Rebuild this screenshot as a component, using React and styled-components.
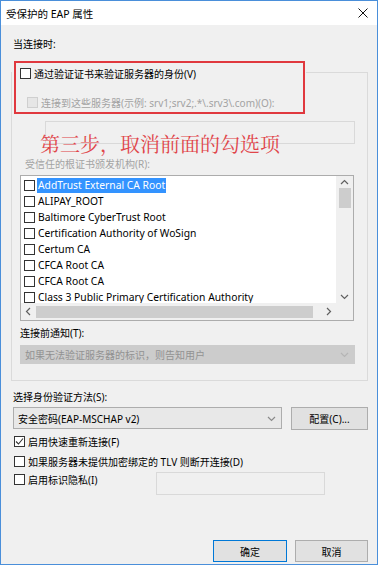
import React from 'react'
import styled, { createGlobalStyle } from 'styled-components'

const Global = createGlobalStyle`
  html, body { margin: 0; padding: 0; background: #ffffff; }
  body { font-family: "Noto Sans", "Noto Sans CJK SC", sans-serif; }
`

const Window = styled.div`
  width: 378px;
  height: 565px;
  box-sizing: border-box;
  border: 1px solid #4a8fda;
  display: flex;
  flex-direction: column;
  background: #f0f0f0;
  overflow: hidden;
`
const TitleBar = styled.div`
  height: 24px;
  background: #ffffff;
  display: flex;
  align-items: center;
  justify-content: space-between;
  padding: 0 9px 0 5px;
  font-size: 10.5px;
  color: #000;
`
const Body = styled.div`
  flex: 1;
  position: relative;
  display: flex;
  flex-direction: column;
  padding: 11px 9px 1px 10px;
  font-size: 10px;
  color: #000;
`
const Label = styled.div`
  height: 16px;
  line-height: 16px;
  margin-top: ${(p) => p.$mt || 0}px;
  margin-left: ${(p) => p.$ml || 0}px;
  color: ${(p) => (p.$disabled ? '#a3a3a3' : '#000')};
  white-space: nowrap;
`
const Panel = styled.div`
  margin-top: 20px;
  border: 1px solid #dadada;
  display: flex;
  flex-direction: column;
  padding-bottom: 16px;
`
const PanelHeader = styled.div`
  margin-top: -8px;
  width: 294px;
  height: 16px;
  padding-left: 8px;
  box-sizing: border-box;
  background: #f0f0f0;
  display: flex;
  align-items: center;
`
const CheckRow = styled.div`
  display: flex;
  align-items: center;
  gap: 3px;
  height: 16px;
  margin-top: ${(p) => p.$mt || 0}px;
  margin-left: ${(p) => p.$ml || 0}px;
  color: ${(p) => (p.$disabled ? '#a3a3a3' : '#000')};
  white-space: nowrap;
`
const Box = styled.span`
  width: 11px;
  height: 11px;
  box-sizing: border-box;
  flex: none;
  border: 1px solid ${(p) => (p.$disabled ? '#cfcfcf' : '#333333')};
  background: ${(p) => (p.$disabled ? '#e6e6e6' : '#ffffff')};
  display: flex;
  align-items: center;
  justify-content: center;
`
const TextField = styled.div`
  margin-top: ${(p) => p.$mt || 0}px;
  margin-left: ${(p) => p.$ml || 0}px;
  width: ${(p) => p.$w}px;
  height: 23px;
  box-sizing: border-box;
  border: 1px solid #d9d9d9;
  background: #f0f0f0;
  flex: none;
`
const ListBox = styled.div`
  margin: 3px 0 0 8px;
  width: 334px;
  height: 146px;
  box-sizing: border-box;
  border: 1px solid #acacac;
  background: #ffffff;
  display: grid;
  grid-template-columns: 1fr 17px;
  grid-template-rows: 1fr 17px;
  font-size: 10.3px;
`
const Items = styled.div`
  padding: 1px 0 0 3px;
  overflow: hidden;
`
const Item = styled.div`
  height: 16px;
  display: flex;
  align-items: center;
  gap: 2px;
  white-space: nowrap;
`
const ItemText = styled.span`
  padding: 0 1px;
  line-height: 15px;
  background: ${(p) => (p.$selected ? '#3393ff' : 'transparent')};
  color: ${(p) => (p.$selected ? '#ffffff' : '#000')};
`
const VScroll = styled.div`
  background: #f0f0f0;
  display: flex;
  flex-direction: column;
  align-items: center;
  justify-content: space-between;
  padding: 3px 0;
`
const VThumb = styled.div`
  width: 12px;
  height: 20px;
  background: #cdcdcd;
  margin-top: 2px;
  margin-bottom: auto;
`
const HScroll = styled.div`
  background: #f0f0f0;
  display: flex;
  align-items: center;
  padding: 0 4px 0 4px;
`
const HThumb = styled.div`
  width: 277px;
  height: 12px;
  background: #cdcdcd;
  margin: 0 auto 0 4px;
`
const Corner = styled.div`
  background: #f0f0f0;
`
const Combo = styled.div`
  margin-top: ${(p) => p.$mt || 0}px;
  margin-left: ${(p) => p.$ml || 0}px;
  width: ${(p) => p.$w}px;
  height: ${(p) => p.$h || 22}px;
  box-sizing: border-box;
  border: 1px solid ${(p) => (p.$disabled ? '#cccccc' : '#adadad')};
  background: ${(p) => (p.$disabled ? '#cccccc' : '#e8e8e8')};
  color: ${(p) => (p.$disabled ? '#929292' : '#000')};
  display: flex;
  align-items: center;
  justify-content: space-between;
  padding: 0 5px 0 4px;
  white-space: nowrap;
`
const Button = styled.div`
  width: ${(p) => p.$w}px;
  height: ${(p) => p.$h || 22}px;
  box-sizing: border-box;
  border: 1px solid ${(p) => (p.$focused ? '#0078d7' : '#adadad')};
  background: #e1e1e1;
  display: flex;
  align-items: center;
  justify-content: center;
  flex: none;
`
const MethodRow = styled.div`
  display: flex;
  gap: 9px;
  margin-left: 2px;
  margin-top: 2px;
`
const PrivacyRow = styled.div`
  display: flex;
  align-items: flex-start;
  margin-top: 2px;
`
const PrivacyLabel = styled.div`
  width: 145px;
  flex: none;
`
const Footer = styled.div`
  margin-top: auto;
  display: flex;
  justify-content: flex-end;
  gap: 8px;
  padding-bottom: 1px;
`
const RedFrame = styled.div`
  position: absolute;
  left: 13px;
  top: 36px;
  width: 291px;
  height: 53px;
  box-sizing: border-box;
  border: 2px solid #e0383e;
  pointer-events: none;
`
const Note = styled.div`
  position: absolute;
  left: 39px;
  top: 110px;
  font-family: "Noto Serif CJK SC", "Noto Sans CJK SC", serif;
  font-size: 20px;
  line-height: 18px;
  color: #e0454a;
  white-space: nowrap;
`

const Chevron = ({ dir = 'down', color = '#606060' }) => {
  const d = {
    up: 'M1 5 L4.5 1.5 L8 5',
    down: 'M1 2 L4.5 5.5 L8 2',
    left: 'M5 1 L1.5 4.5 L5 8',
    right: 'M2 1 L5.5 4.5 L2 8',
  }[dir]
  const horiz = dir === 'left' || dir === 'right'
  return (
    <svg width={horiz ? 7 : 9} height={horiz ? 9 : 7} viewBox={horiz ? '0 0 7 9' : '0 0 9 7'}>
      <path d={d} fill="none" stroke={color} strokeWidth="1.2" />
    </svg>
  )
}

const Check = ({ checked, disabled }) => (
  <Box $disabled={disabled}>
    {checked && (
      <svg width="9" height="9" viewBox="0 0 9 9">
        <path d="M1 4.5 L3.5 7 L8 1.5" fill="none" stroke="#333" strokeWidth="1.1" />
      </svg>
    )}
  </Box>
)

const certs = [
  'AddTrust External CA Root',
  'ALIPAY_ROOT',
  'Baltimore CyberTrust Root',
  'Certification Authority of WoSign',
  'Certum CA',
  'CFCA Root CA',
  'CFCA Root CA',
  'Class 3 Public Primary Certification Authority',
]

export default function App() {
  return (
    <>
      <Global />
      <Window>
        <TitleBar>
          <span>受保护的 EAP 属性</span>
          <svg width="10" height="10" viewBox="0 0 10 10">
            <path d="M0.5 0.5 L9.5 9.5 M9.5 0.5 L0.5 9.5" stroke="#111" strokeWidth="1" />
          </svg>
        </TitleBar>
        <Body>
          <Label $ml={2}>当连接时:</Label>
          <Panel>
            <PanelHeader>
              <CheckRow>
                <Check />
                <span>通过验证证书来验证服务器的身份(V)</span>
              </CheckRow>
            </PanelHeader>
            <CheckRow $mt={13} $ml={15} $disabled>
              <Check disabled />
              <span>连接到这些服务器(示例: srv1;srv2;.*\.srv3\.com)(O):</span>
            </CheckRow>
            <TextField $mt={11} $ml={33} $w={310} />
            <Label $mt={12} $ml={13} $disabled>受信任的根证书颁发机构(R):</Label>
            <ListBox>
              <Items>
                {certs.map((c, i) => (
                  <Item key={i}>
                    <Check />
                    <ItemText $selected={i === 0}>{c}</ItemText>
                  </Item>
                ))}
              </Items>
              <VScroll>
                <Chevron dir="up" />
                <VThumb />
                <Chevron dir="down" />
              </VScroll>
              <HScroll>
                <Chevron dir="left" />
                <HThumb />
                <Chevron dir="right" />
              </HScroll>
              <Corner />
            </ListBox>
            <Label $mt={4} $ml={8}>连接前通知(T):</Label>
            <Combo $mt={4} $ml={8} $w={335} $h={19} $disabled>
              <span>如果无法验证服务器的标识，则告知用户</span>
              <Chevron dir="down" color="#b5b5b5" />
            </Combo>
          </Panel>
          <Label $mt={8} $ml={2}>选择身份验证方法(S):</Label>
          <MethodRow>
            <Combo $w={269} $h={22}>
              <span>安全密码(EAP-MSCHAP v2)</span>
              <Chevron dir="down" color="#8a8a8a" />
            </Combo>
            <Button $w={77} $h={23}>配置(C)...</Button>
          </MethodRow>
          <CheckRow $mt={3} $ml={3}>
            <Check checked />
            <span>启用快速重新连接(F)</span>
          </CheckRow>
          <CheckRow $mt={4} $ml={3}>
            <Check />
            <span>如果服务器未提供加密绑定的 TLV 则断开连接(D)</span>
          </CheckRow>
          <PrivacyRow>
            <PrivacyLabel>
              <CheckRow $ml={3}>
                <Check />
                <span>启用标识隐私(I)</span>
              </CheckRow>
            </PrivacyLabel>
            <TextField $mt={1} $w={169} />
          </PrivacyRow>
          <Footer>
            <Button $w={74} $focused>确定</Button>
            <Button $w={73}>取消</Button>
          </Footer>
          <RedFrame />
          <Note>第三步，取消前面的勾选项</Note>
        </Body>
      </Window>
    </>
  )
}
